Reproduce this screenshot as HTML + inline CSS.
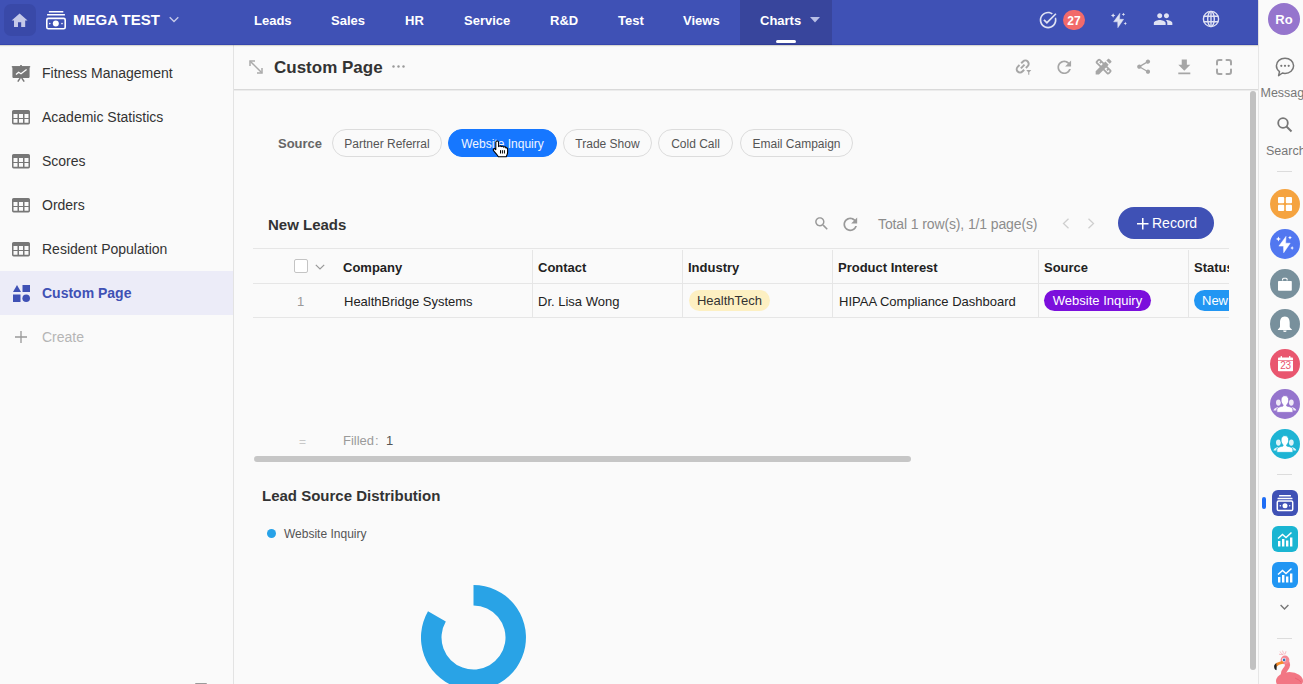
<!DOCTYPE html>
<html><head><meta charset="utf-8">
<style>
*{box-sizing:border-box;margin:0;padding:0}
html,body{width:1303px;height:684px;overflow:hidden;background:#fafafa;font-family:"Liberation Sans",sans-serif;color:#333}
.abs{position:absolute}
svg{position:absolute;overflow:visible}
#top{position:absolute;z-index:5;left:0;top:0;width:1258px;height:45px;background:#3f51b5;border-bottom:1px solid #3546ad;box-shadow:0 1px 1px rgba(40,40,0,.16)}
#home{position:absolute;left:4px;top:4px;width:32px;height:32px;border-radius:7px;background:#3949a8}
.brand{position:absolute;left:73px;top:11px;font-size:15px;font-weight:bold;color:#fff}
.nav{position:absolute;top:13px;font-size:13px;font-weight:bold;color:#fff;white-space:nowrap}
#charts{position:absolute;left:740px;top:0;width:92px;height:45px;background:#38459c;border-bottom:1px solid #2f3b95}
#side{position:absolute;left:0;top:45px;width:234px;height:639px;background:#fafafa;border-right:1px solid #e3e3e3}
.si{position:absolute;left:0;width:233px;height:44px}
.si .t{position:absolute;left:42px;top:14px;font-size:14px;color:#333;white-space:nowrap}
.si.act{background:#ececf8}
.si.act .t{color:#3f51b5;font-weight:bold}
#rail{position:absolute;left:1258px;top:0;width:45px;height:684px;background:#fafafa;border-left:1px solid #e6e6e6}
.rl{position:absolute;font-size:12px;color:#777;white-space:nowrap}
.rc{position:absolute;left:10.5px;width:30px;height:30px;border-radius:50%}
.rs{position:absolute;left:12.5px;width:26px;height:26px;border-radius:6px}
.rdiv{position:absolute;left:18px;width:15px;height:1px;background:#dcdcdc}
#main{position:absolute;left:234px;top:45px;width:1024px;height:639px;background:#fafafa}
#titlebar{position:absolute;left:0;top:0;width:1024px;height:45px;border-bottom:1px solid #d9d9d9;box-shadow:0 1px 0 #ececec}
.chip{position:absolute;top:129px;height:28px;border:1px solid #dcdcdc;border-radius:14px;font-size:12px;color:#555;line-height:28px;text-align:center;white-space:nowrap}
.chip.on{background:#1677ff;border-color:#1677ff;color:#f0f5ff}
.th{position:absolute;top:260px;font-size:13px;font-weight:bold;color:#222;white-space:nowrap}
.td{position:absolute;top:294px;font-size:13px;color:#222;white-space:nowrap}
.vl{position:absolute;width:1px;background:#e6e6e6;top:250px;height:67px}
.hl{position:absolute;height:1px;background:#e6e6e6;left:253px;width:976px}
.tag{position:absolute;top:290px;height:21px;border-radius:11px;font-size:13px;line-height:22px;text-align:center;white-space:nowrap}
</style></head><body>
<div id="top">
  <div id="home">
    <svg style="left:6.4px;top:6.5px" width="19.2" height="19.2" viewBox="0 0 24 24"><path fill="#c5c9e8" d="M10 20v-6h4v6h5v-8h3L12 3 2 12h3v8z"/></svg>
  </div>
  <svg style="left:46px;top:10.9px" width="20" height="19" viewBox="0 0 20 19"><rect x="2.8" y="0" width="14.6" height="1.6" rx=".5" fill="#fff"/><rect x="1" y="2.9" width="18" height="1.7" rx=".5" fill="#fff"/><rect x="0.8" y="7.4" width="18.4" height="10.3" rx="1.5" fill="none" stroke="#fff" stroke-width="1.6"/><circle cx="9.8" cy="12.6" r="3" fill="#fff"/><circle cx="3.8" cy="12.6" r=".8" fill="#fff"/><circle cx="16" cy="12.6" r=".8" fill="#fff"/></svg>
  <div class="brand">MEGA TEST</div>
  <svg style="left:169px;top:16px" width="10" height="7" viewBox="0 0 10 7"><path d="M.7 1.2l4.3 4.3 4.3-4.3" fill="none" stroke="#c5c9e8" stroke-width="1.4"/></svg>
  <div class="nav" style="left:254px">Leads</div>
  <div class="nav" style="left:331px">Sales</div>
  <div class="nav" style="left:405px">HR</div>
  <div class="nav" style="left:464px">Service</div>
  <div class="nav" style="left:550px">R&amp;D</div>
  <div class="nav" style="left:618px">Test</div>
  <div class="nav" style="left:683px">Views</div>
  <div id="charts">
    <div class="nav" style="left:20px">Charts</div>
    <svg style="left:70px;top:17px" width="10" height="6" viewBox="0 0 10 6"><path d="M0 0h10L5 5.5z" fill="#b9bfe6"/></svg>
    <div class="abs" style="left:36px;top:39.8px;width:20px;height:3px;border-radius:1.5px;background:#fff"></div>
  </div>
  <!-- right icons -->
  <svg style="left:1037.5px;top:9.8px" width="20.2" height="20.2" viewBox="0 0 24 24"><path fill="#dfe2f3" d="M22 5.18L10.59 16.6l-4.24-4.24 1.41-1.41 2.83 2.83 10-10L22 5.18zm-2.21 5.04c.13.57.21 1.17.21 1.78 0 4.42-3.58 8-8 8s-8-3.58-8-8 3.58-8 8-8c1.58 0 3.04.46 4.28 1.25l1.44-1.44C16.1 2.67 14.13 2 12 2 6.48 2 2 6.48 2 12s4.48 10 10 10 10-4.48 10-10c0-1.19-.22-2.33-.6-3.39l-1.61 1.61z"/></svg>
  <div class="abs" style="left:1063px;top:10px;width:22px;height:20px;border-radius:10px;background:#f26a6a;color:#fff;font-size:12px;font-weight:bold;text-align:center;line-height:22px">27</div>
  <svg style="left:1111px;top:11.5px" width="16" height="16" viewBox="0 0 18 18"><path d="M10 1.4 L2.9 11.1 H7.5 L7.7 17.7 L14.2 8.2 H9.6 Z" fill="#dfe2f3" stroke="#dfe2f3" stroke-width=".5" stroke-linejoin="round"/><path d="M2.40 1.50 L3.20 3.20 L4.90 4.00 L3.20 4.80 L2.40 6.50 L1.60 4.80 L-0.10 4.00 L1.60 3.20Z M14.00 0.80 L14.61 2.09 L15.90 2.70 L14.61 3.31 L14.00 4.60 L13.39 3.31 L12.10 2.70 L13.39 2.09Z M16.10 11.10 L16.71 12.39 L18.00 13.00 L16.71 13.61 L16.10 14.90 L15.49 13.61 L14.20 13.00 L15.49 12.39Z" fill="#dfe2f3"/></svg>
  <svg style="left:1152.9px;top:8.8px" width="20.2" height="20.2" viewBox="0 0 24 24"><path fill="#dfe2f3" d="M16 11c1.66 0 2.99-1.34 2.99-3S17.66 5 16 5c-1.66 0-3 1.34-3 3s1.34 3 3 3zm-8 0c1.66 0 2.99-1.34 2.99-3S9.66 5 8 5C6.34 5 5 6.34 5 8s1.34 3 3 3zm0 2c-2.33 0-7 1.17-7 3.5V19h14v-2.5c0-2.33-4.67-3.5-7-3.5zm8 0c-.29 0-.62.02-.97.05 1.16.84 1.97 1.970 1.970 3.450V19h6v-2.500c0-2.330-4.670-3.500-7-3.500z"/></svg>
  <svg style="left:1202px;top:10px" width="18" height="18" viewBox="0 0 18 18"><g fill="none" stroke="#dfe2f3" stroke-width="1.4"><circle cx="9" cy="9" r="7.6"/><ellipse cx="9" cy="9" rx="3.3" ry="7.6"/><path d="M1.6 6.3h14.8M1.6 11.7h14.8M9 1.4v15.2"/></g></svg>
</div>

<div id="side">
  <div class="si" style="top:6px">
    <svg style="left:12px;top:14px" width="18" height="17" viewBox="0 0 18 17"><rect x="8.2" y="0" width="1.6" height="1.6" fill="#777"/><rect x="-.2" y="1.1" width="18.4" height="1.2" fill="#777"/><rect x=".4" y="1.5" width="17.2" height="11.4" rx=".8" fill="#777"/><path d="M4 9.6L6.6 7.3 9 8.8 14.6 4.6" fill="none" stroke="#fff" stroke-width="1.3"/><path d="M8.3 12.8L5.8 16.6M9.7 12.8l2.5 3.8" stroke="#777" stroke-width="1.5"/></svg>
    <div class="t">Fitness Management</div></div>
  <div class="si" style="top:50px">
    <svg style="left:12px;top:15px" width="18" height="14.4" viewBox="0 0 18 14.4"><path fill="#777" fill-rule="evenodd" d="M1.6 0h14.8A1.6 1.6 0 0 1 18 1.6v11.2a1.6 1.6 0 0 1-1.6 1.6H1.6A1.6 1.6 0 0 1 0 12.8V1.6A1.6 1.6 0 0 1 1.6 0zM1.5 4v4h4V4zm5.5 0v4h4V4zm5.5 0v4h4V4zM1.5 9v3.8h4V9zm5.5 0v3.8h4V9zm5.5 0v3.8h4V9z"/></svg>
    <div class="t">Academic Statistics</div></div>
  <div class="si" style="top:94px">
    <svg style="left:12px;top:15px" width="18" height="14.4" viewBox="0 0 18 14.4"><path fill="#777" fill-rule="evenodd" d="M1.6 0h14.8A1.6 1.6 0 0 1 18 1.6v11.2a1.6 1.6 0 0 1-1.6 1.6H1.6A1.6 1.6 0 0 1 0 12.8V1.6A1.6 1.6 0 0 1 1.6 0zM1.5 4v4h4V4zm5.5 0v4h4V4zm5.5 0v4h4V4zM1.5 9v3.8h4V9zm5.5 0v3.8h4V9zm5.5 0v3.8h4V9z"/></svg>
    <div class="t">Scores</div></div>
  <div class="si" style="top:138px">
    <svg style="left:12px;top:15px" width="18" height="14.4" viewBox="0 0 18 14.4"><path fill="#777" fill-rule="evenodd" d="M1.6 0h14.8A1.6 1.6 0 0 1 18 1.6v11.2a1.6 1.6 0 0 1-1.6 1.6H1.6A1.6 1.6 0 0 1 0 12.8V1.6A1.6 1.6 0 0 1 1.6 0zM1.5 4v4h4V4zm5.5 0v4h4V4zm5.5 0v4h4V4zM1.5 9v3.8h4V9zm5.5 0v3.8h4V9zm5.5 0v3.8h4V9z"/></svg>
    <div class="t">Orders</div></div>
  <div class="si" style="top:182px">
    <svg style="left:12px;top:15px" width="18" height="14.4" viewBox="0 0 18 14.4"><path fill="#777" fill-rule="evenodd" d="M1.6 0h14.8A1.6 1.6 0 0 1 18 1.6v11.2a1.6 1.6 0 0 1-1.6 1.6H1.6A1.6 1.6 0 0 1 0 12.8V1.6A1.6 1.6 0 0 1 1.6 0zM1.5 4v4h4V4zm5.5 0v4h4V4zm5.5 0v4h4V4zM1.5 9v3.8h4V9zm5.5 0v3.8h4V9zm5.5 0v3.8h4V9z"/></svg>
    <div class="t">Resident Population</div></div>
  <div class="si act" style="top:226px">
    <svg style="left:12.5px;top:14px" width="17" height="17" viewBox="0 0 17 17"><path d="M4 0L8 7H0z" fill="#3f51b5"/><rect x="9.5" y="0" width="7.5" height="7" fill="#3f51b5"/><rect x="0" y="9.5" width="7.5" height="7.5" fill="#3f51b5"/><circle cx="13.2" cy="13.2" r="3.8" fill="#3f51b5"/></svg>
    <div class="t">Custom Page</div></div>
  <div class="si" style="top:270px">
    <svg style="left:15px;top:16px" width="12" height="12" viewBox="0 0 12 12"><path d="M6 0v12M0 6h12" stroke="#999" stroke-width="1.3"/></svg>
    <div class="t" style="color:#b5b5b5">Create</div></div>
  <div class="abs" style="left:195px;top:638px;width:12px;height:2px;background:#9a9a9a;border-radius:1px"></div>
</div>

<div id="main">
  <div id="titlebar">
    <svg style="left:15px;top:15px" width="14" height="14" viewBox="0 0 14 14"><g fill="none" stroke="#aaa" stroke-width="1.5"><path d="M1.2 1.2l11.6 11.6"/><path d="M1 6V1h5M13 8v5H8"/></g></svg>
    <div class="abs" style="left:40px;top:13px;font-size:17px;font-weight:bold;color:#333;white-space:nowrap">Custom Page</div>
    <svg style="left:158px;top:20px" width="13" height="3" viewBox="0 0 13 3"><circle cx="1.5" cy="1.5" r="1.2" fill="#999"/><circle cx="6.5" cy="1.5" r="1.2" fill="#999"/><circle cx="11.5" cy="1.5" r="1.2" fill="#999"/></svg>
    <!-- right toolbar icons -->
    <svg style="left:780px;top:12px" width="20" height="20" viewBox="0 0 20 20"><g transform="translate(8.7 9.5) rotate(-45)" fill="none" stroke="#a6a6a6" stroke-width="2"><path d="M-1.2 -3.3H-3.8A3.3 3.3 0 0 0 -3.8 3.3H-1.2"/><path d="M1.2 -3.3H3.8A3.3 3.3 0 0 1 3.8 3.3H1.2"/><path d="M-2.6 0H2.6"/></g><path d="M12.2 13H17.3L15.3 15.3V17.8H14.2V15.3Z" fill="#a6a6a6"/></svg>
    <svg style="left:819.7px;top:11.7px" width="20.5" height="20.5" viewBox="0 0 24 24"><path fill="#a6a6a6" d="M17.65 6.35C16.2 4.9 14.21 4 12 4c-4.42 0-7.99 3.58-7.99 8s3.57 8 7.99 8c3.730 0 6.840-2.550 7.730-6h-2.080c-.820 2.330-3.040 4-5.650 4-3.310 0-6-2.690-6-6s2.690-6 6-6c1.660 0 3.140.690 4.220 1.780L13 11h7V4l-2.350 2.350z"/></svg>
    <svg style="left:859.4px;top:11.4px" width="21.2" height="21.2" viewBox="0 0 24 24"><path fill="#a6a6a6" d="M16.24 11.51l1.57-1.57-3.75-3.75-1.57 1.57-4.14-4.13c-.78-.78-2.05-.78-2.83 0l-1.9 1.9c-.78.78-.78 2.05 0 2.83l4.13 4.13L3 17.25V21h3.75l4.76-4.76 4.13 4.13c.95.95 2.23.6 2.83 0l1.9-1.9c.78-.78.78-2.05 0-2.83l-4.13-4.13zm-7.06-.44L5.04 6.94l1.89-1.9L8.2 6.31 7.02 7.5l1.41 1.41 1.19-1.19 1.45 1.45-1.89 1.9zm7.88 7.89l-4.13-4.14 1.9-1.9 1.45 1.45-1.19 1.19 1.41 1.41 1.19-1.19 1.27 1.27-1.9 1.91zM20.71 7.04c.39-.39.39-1.02 0-1.41l-2.34-2.34c-.47-.47-1.12-.29-1.41 0l-1.83 1.83 3.750 3.750 1.830-1.830z"/></svg>
    <svg style="left:901.4px;top:13.2px" width="17.3" height="17.3" viewBox="0 0 24 24"><path fill="#a6a6a6" d="M18 16.08c-.76 0-1.44.3-1.96.77L8.91 12.7c.05-.23.09-.46.09-.7s-.04-.47-.09-.7l7.05-4.11c.54.5 1.25.81 2.04.81 1.66 0 3-1.34 3-3s-1.34-3-3-3-3 1.34-3 3c0 .24.04.47.09.7L8.04 9.81C7.5 9.31 6.79 9 6 9c-1.66 0-3 1.34-3 3s1.34 3 3 3c.79 0 1.5-.31 2.04-.81l7.12 4.16c-.05.21-.08.43-.08.65 0 1.61 1.31 2.92 2.92 2.920 1.610 0 2.920-1.310 2.920-2.920s-1.310-2.920-2.920-2.920z"/></svg>
    <svg style="left:939.7px;top:11.5px" width="20.6" height="20.6" viewBox="0 0 24 24"><path fill="#a6a6a6" d="M19 9h-4V3H9v6H5l7 7 7-7zM5 18v2h14v-2H5z"/></svg>
    <svg style="left:982px;top:14px" width="16" height="16" viewBox="0 0 16 16"><path d="M1 5.5V3A2 2 0 0 1 3 1H5.5M10.5 1H13A2 2 0 0 1 15 3V5.5M15 10.5V13A2 2 0 0 1 13 15H10.5M5.5 15H3A2 2 0 0 1 1 13V10.5" fill="none" stroke="#a6a6a6" stroke-width="2" stroke-linecap="round"/></svg>
  </div>
  <div class="abs" style="left:1016px;top:46px;width:6px;height:579px;border-radius:3px;background:#c1c1c1"></div>
</div>

<div class="abs" style="left:278px;top:136px;font-size:13px;font-weight:bold;color:#666">Source</div>
<div class="chip" style="left:332px;width:110px">Partner Referral</div>
<div class="chip on" style="left:448px;width:109px">Website Inquiry</div>
<div class="chip" style="left:563px;width:89px">Trade Show</div>
<div class="chip" style="left:658px;width:75px">Cold Call</div>
<div class="chip" style="left:740px;width:113px">Email Campaign</div>
<svg style="left:492px;top:140px" width="17" height="18" viewBox="0 0 17 18"><path d="M3.8 2.4C3.8 1.6 4.4 1 5.2 1 6 1 6.6 1.6 6.6 2.4V6.6C7 5.8 8.8 5.6 9.2 6.6 9.8 5.9 11.4 6 11.6 7.1 12.3 6.5 13.9 6.8 14 8 14.6 7.6 15.6 8 15.6 9V12.4C15.6 14 14.9 15.3 14.2 16.8H6.4C5.4 15.2 3.2 12.6 1.7 10.9 1 10.1 1.2 9 2 8.7 2.7 8.5 3.3 8.9 3.8 9.6Z" fill="#fff" stroke="#000" stroke-width="1.1" stroke-linejoin="round"/><path d="M8.5 10.2V13.5M10.4 10.2V13.5M12.4 10.2V13.5" stroke="#000" stroke-width="1"/></svg>

<div class="abs" style="left:268px;top:216px;font-size:15px;font-weight:bold;color:#333">New Leads</div>
<svg style="left:812.8px;top:215px" width="17.3" height="17.3" viewBox="0 0 24 24"><path fill="#999" d="M15.5 14h-.79l-.28-.27C15.41 12.59 16 11.11 16 9.5 16 5.91 13.09 3 9.5 3S3 5.910 3 9.500 5.910 16 9.500 16c1.610 0 3.090-.590 4.230-1.570l.270.280v.790l5 4.990L20.490 19l-4.990-5zm-6 0C7.010 14 5 11.990 5 9.500S7.010 5 9.500 5 14 7.010 14 9.500 11.990 14 9.500 14z"/></svg>
<svg style="left:839.6px;top:213.8px" width="20.6" height="20.6" viewBox="0 0 24 24"><path fill="#999" d="M17.65 6.35C16.2 4.9 14.21 4 12 4c-4.42 0-7.99 3.58-7.99 8s3.57 8 7.99 8c3.730 0 6.840-2.550 7.730-6h-2.080c-.820 2.330-3.040 4-5.650 4-3.310 0-6-2.690-6-6s2.690-6 6-6c1.660 0 3.140.690 4.220 1.780L13 11h7V4l-2.350 2.350z"/></svg>
<div class="abs" style="left:878px;top:216px;font-size:14px;color:#8c8c8c;white-space:nowrap;letter-spacing:-.12px">Total 1 row(s), 1/1 page(s)</div>
<svg style="left:1062px;top:218px" width="8" height="11" viewBox="0 0 8 11"><path d="M6.5 .8L1.5 5.5l5 4.7" fill="none" stroke="#cfcfcf" stroke-width="1.3"/></svg>
<svg style="left:1087px;top:218px" width="8" height="11" viewBox="0 0 8 11"><path d="M1.5 .8l5 4.7-5 4.7" fill="none" stroke="#cfcfcf" stroke-width="1.3"/></svg>
<div class="abs" style="left:1118px;top:207px;width:96px;height:32px;border-radius:16px;background:#3f51b5"></div>
<svg style="left:1136.5px;top:217.5px" width="11.5" height="11.5" viewBox="0 0 12 12"><path d="M6 0v12M0 6h12" stroke="#fff" stroke-width="1.6"/></svg>
<div class="abs" style="left:1152px;top:215px;font-size:14px;color:#fff">Record</div>

<div class="hl" style="top:248px"></div>
<div class="hl" style="top:283px"></div>
<div class="hl" style="top:317px"></div>
<div class="vl" style="left:532px"></div>
<div class="vl" style="left:682px"></div>
<div class="vl" style="left:832px"></div>
<div class="vl" style="left:1038px"></div>
<div class="vl" style="left:1188px"></div>
<div class="abs" style="left:294px;top:259px;width:14px;height:14px;border:1px solid #c4c4c4;border-radius:2px;background:#fff"></div>
<svg style="left:315px;top:264px" width="10" height="6" viewBox="0 0 10 6"><path d="M.8 .8L5 5 9.2 .8" fill="none" stroke="#999" stroke-width="1.2"/></svg>
<div class="th" style="left:343px">Company</div>
<div class="th" style="left:538px">Contact</div>
<div class="th" style="left:688px">Industry</div>
<div class="th" style="left:838px">Product Interest</div>
<div class="th" style="left:1044px">Source</div>
<div class="th" style="left:1194px;width:35px;overflow:hidden">Status</div>
<div class="td" style="left:297px;color:#999">1</div>
<div class="td" style="left:344px">HealthBridge Systems</div>
<div class="td" style="left:538px">Dr. Lisa Wong</div>
<div class="tag" style="left:689px;width:81px;background:#fdf0c2;color:#333">HealthTech</div>
<div class="td" style="left:839px">HIPAA Compliance Dashboard</div>
<div class="tag" style="left:1044px;width:107px;background:#7b0fdc;color:#fff">Website Inquiry</div>
<div class="abs" style="left:1194px;top:290px;width:35px;height:21px;overflow:hidden"><div class="tag" style="left:0;top:0;width:50px;background:#2196f3;color:#fff;text-align:left;padding-left:8px">New</div></div>

<div class="abs" style="left:299px;top:435px;font-size:12px;color:#c8c8c8">=</div>
<div class="abs" style="left:343px;top:433px;font-size:13px;color:#9a9a9a">Filled</div><div class="abs" style="left:375px;top:433px;font-size:13px;color:#9a9a9a">:</div>
<div class="abs" style="left:386px;top:433px;font-size:13px;color:#555">1</div>
<div class="abs" style="left:254px;top:456px;width:657px;height:6px;border-radius:3px;background:#c6c6c6"></div>

<div class="abs" style="left:262px;top:487px;font-size:15px;font-weight:bold;color:#333;white-space:nowrap">Lead Source Distribution</div>
<div class="abs" style="left:267px;top:529px;width:9px;height:9px;border-radius:50%;background:#27a2e8"></div>
<div class="abs" style="left:284px;top:527px;font-size:12px;color:#555">Website Inquiry</div>
<svg style="left:0;top:0" width="1303" height="684" viewBox="0 0 1303 684"><path d="M473.5 585 A52.5 52.5 0 1 1 428 611.25 L445.8 621.5 A32 32 0 1 0 473.5 605.5 Z" fill="#29a3e6"/></svg>

<div id="rail">
  <div class="abs" style="left:9px;top:3px;width:32px;height:32px;border-radius:50%;background:#9575cd;color:#fff;font-size:13px;font-weight:bold;text-align:center;line-height:34px">Ro</div>
  <svg style="left:16px;top:57px" width="20" height="20" viewBox="0 0 20 20"><path d="M10 1.2c4.8 0 8.6 3.3 8.6 7.6S14.8 16.4 10 16.4c-.9 0-1.8-.1-2.6-.4L3.6 18.6l.9-4C2.5 13.2 1.4 11.1 1.4 8.8 1.4 4.5 5.2 1.2 10 1.2z" fill="none" stroke="#777" stroke-width="1.5" stroke-linejoin="round"/><circle cx="6.3" cy="8.8" r="1.1" fill="#777"/><circle cx="10" cy="8.8" r="1.1" fill="#777"/><circle cx="13.7" cy="8.8" r="1.1" fill="#777"/></svg>
  <div class="rl" style="left:1.5px;top:86px;font-size:12.5px">Message</div>
  <svg style="left:18px;top:117px" width="16" height="15" viewBox="0 0 16 15"><circle cx="6" cy="6" r="4.8" fill="none" stroke="#777" stroke-width="1.8"/><path d="M9.5 9.5l5 5" stroke="#777" stroke-width="2"/></svg>
  <div class="rl" style="left:7px;top:144px;font-size:12.5px">Search</div>
  <div class="rdiv" style="top:171px"></div>
  <div class="rc" style="top:189px;background:#f5a33f">
    <svg style="left:8px;top:8px" width="14" height="14" viewBox="0 0 14 14"><g fill="#fff"><rect x="0" y="0" width="6.2" height="6.2" rx="1"/><rect x="7.8" y="0" width="6.2" height="6.2" rx="1"/><rect x="0" y="7.8" width="6.2" height="6.2" rx="1"/><rect x="7.8" y="7.8" width="6.2" height="6.2" rx="1"/></g></svg>
  </div>
  <div class="rc" style="top:229px;background:#5177f0">
    <svg style="left:6px;top:6px" width="18" height="18" viewBox="0 0 18 18"><path d="M10 1.4 L2.9 11.1 H7.5 L7.7 17.7 L14.2 8.2 H9.6 Z" fill="#fff" stroke="#fff" stroke-width=".5" stroke-linejoin="round"/><path d="M2.40 1.50 L3.20 3.20 L4.90 4.00 L3.20 4.80 L2.40 6.50 L1.60 4.80 L-0.10 4.00 L1.60 3.20Z M14.00 0.80 L14.61 2.09 L15.90 2.70 L14.61 3.31 L14.00 4.60 L13.39 3.31 L12.10 2.70 L13.39 2.09Z M16.10 11.10 L16.71 12.39 L18.00 13.00 L16.71 13.61 L16.10 14.90 L15.49 13.61 L14.20 13.00 L15.49 12.39Z" fill="#fff"/></svg>
  </div>
  <div class="rc" style="top:269px;background:#78909c">
    <svg style="left:0;top:0" width="30" height="30" viewBox="0 0 30 30"><path d="M12.6 11.6V10.2c0-.6.4-1 1-1h2.5c.6 0 1 .4 1 1v1.4" fill="none" stroke="#fff" stroke-width="1.1"/><rect x="8" y="11.9" width="13.8" height="9.8" rx=".8" fill="#fff"/></svg>
  </div>
  <div class="rc" style="top:309px;background:#78909c">
    <svg style="left:0;top:0" width="30" height="30" viewBox="0 0 30 30"><path d="M14.85 7.6C11.3 7.6 10 10.4 10 13.5V17.4C10 18.5 8.9 19.5 7.9 20.2V21H21.8V20.2C20.8 19.5 19.7 18.5 19.7 17.4V13.5C19.7 10.4 18.4 7.6 14.85 7.6Z" fill="#fff"/><path d="M13.1 21.6H16.6A1.75 1.5 0 0 1 13.1 21.6Z" fill="#fff"/></svg>
  </div>
  <div class="rc" style="top:349px;background:#e9566f">
    <svg style="left:8px;top:7px" width="15" height="16" viewBox="0 0 15 16"><rect x="0" y="1.6" width="15" height="13.7" rx=".8" fill="#fff"/><rect x="2.6" y="0" width="1.4" height="2.5" rx=".5" fill="#fff"/><rect x="11" y="0" width="1.4" height="2.5" rx=".5" fill="#fff"/><rect x="0" y="4.2" width="15" height=".7" fill="#e9566f"/><text x="7.5" y="13.4" font-size="10" font-family="Liberation Sans" fill="#e9566f" text-anchor="middle" letter-spacing="-.3">23</text></svg>
  </div>
  <div class="rc" style="top:389px;background:#9575cd">
    <svg style="left:0;top:0" width="30" height="30" viewBox="0 0 30 30"><g fill="#fff" opacity=".85"><ellipse cx="8.4" cy="13.6" rx="2.4" ry="3.1"/><ellipse cx="21.3" cy="13.6" rx="2.4" ry="3.1"/><path d="M3.4 21.4c.3-1.6 2.2-2.6 5-3.3l2.4.6v2.7z"/><path d="M26.3 21.4c-.3-1.6-2.2-2.6-5-3.3l-2.4.6v2.7z"/></g><g fill="#fff" stroke="#9575cd" stroke-width=".9"><path d="M14.85 6.6c2.3 0 3.9 1.9 3.9 4.4 0 2.2-.9 3.9-2 4.9v1.1c3.6.6 6.2 1.8 6.2 3.8v2.6H6.8v-2.6c0-2 2.6-3.2 6.2-3.8v-1.1c-1.1-1-2-2.7-2-4.9 0-2.5 1.6-4.4 3.9-4.4z"/></g></svg>
  </div>
  <div class="rc" style="top:429px;background:#1eb4d4">
    <svg style="left:0;top:0" width="30" height="30" viewBox="0 0 30 30"><g fill="#fff" opacity=".85"><ellipse cx="8.4" cy="13.6" rx="2.4" ry="3.1"/><ellipse cx="21.3" cy="13.6" rx="2.4" ry="3.1"/><path d="M3.4 21.4c.3-1.6 2.2-2.6 5-3.3l2.4.6v2.7z"/><path d="M26.3 21.4c-.3-1.6-2.2-2.6-5-3.3l-2.4.6v2.7z"/></g><g fill="#fff" stroke="#1eb4d4" stroke-width=".9"><path d="M14.85 6.6c2.3 0 3.9 1.9 3.9 4.4 0 2.2-.9 3.9-2 4.9v1.1c3.6.6 6.2 1.8 6.2 3.8v2.6H6.8v-2.6c0-2 2.6-3.2 6.2-3.8v-1.1c-1.1-1-2-2.7-2-4.9 0-2.5 1.6-4.4 3.9-4.4z"/></g></svg>
  </div>
  <div class="rdiv" style="top:474px"></div>
  <div class="abs" style="left:3px;top:497px;width:4px;height:12px;border-radius:2px;background:#1f6df5"></div>
  <div class="rs" style="top:490px;background:#3f51b5">
    <svg style="left:4px;top:4px" width="18" height="18" viewBox="0 0 18 18"><rect x="3" y="1" width="12" height="1.5" rx=".5" fill="#fff"/><rect x="1.5" y="3.8" width="15" height="1.5" rx=".5" fill="#fff"/><rect x="1.3" y="7" width="15.4" height="9.5" rx="1.3" fill="none" stroke="#fff" stroke-width="1.5"/><circle cx="9" cy="11.7" r="2.5" fill="#fff"/><circle cx="4.3" cy="11.7" r=".7" fill="#fff"/><circle cx="13.7" cy="11.7" r=".7" fill="#fff"/></svg>
  </div>
  <div class="rs" style="top:526px;background:#1ab5d2">
    <svg style="left:5px;top:5px" width="16" height="16" viewBox="0 0 16 16"><g fill="#fff"><rect x="1" y="10" width="2.4" height="5.5"/><rect x="5" y="8" width="2.4" height="7.5"/><rect x="9" y="9.5" width="2.4" height="6"/><rect x="13" y="6.5" width="2.4" height="9"/></g><path d="M1 7.5L5.5 3.5l3.5 3 5.5-5" fill="none" stroke="#fff" stroke-width="1.5"/></svg>
  </div>
  <div class="rs" style="top:562px;background:#2196f3">
    <svg style="left:5px;top:5px" width="16" height="16" viewBox="0 0 16 16"><g fill="#fff"><rect x="1" y="10" width="2.4" height="5.5"/><rect x="5" y="8" width="2.4" height="7.5"/><rect x="9" y="9.5" width="2.4" height="6"/><rect x="13" y="6.5" width="2.4" height="9"/></g><path d="M1 7.5L5.5 3.5l3.5 3 5.5-5" fill="none" stroke="#fff" stroke-width="1.5"/></svg>
  </div>
  <svg style="left:21px;top:604px" width="9" height="7" viewBox="0 0 9 7"><path d="M.6 1l3.9 4 3.9-4" fill="none" stroke="#777" stroke-width="1.4"/></svg>
  <div class="rdiv" style="top:638px"></div>
  <svg style="left:14px;top:650px" width="31" height="34" viewBox="0 0 31 34">
    <path d="M7 1.5c.8 1.5 1.8 2.5 3.2 3M9.5 .6c.5 1.6 1 2.6 2 3.6M13 1.2c-.3 1.4-.6 2.4-1.2 3.2M6 4.2c1.4.3 2.8.5 4.2.3" stroke="#f6a0ae" stroke-width=".7" fill="none"/>
    <ellipse cx="16.5" cy="31" rx="13.5" ry="9" fill="#f27684"/>
    <path d="M13.2 11.5c2.6 2.6 1.5 5.5-1.2 8.5-2.3 2.6-2.5 6 .5 8.5" fill="none" stroke="#f27684" stroke-width="5" stroke-linecap="round"/>
    <circle cx="12" cy="10" r="4.4" fill="#f58793"/>
    <path d="M9.5 10.8L3.2 13 1.8 15.6 3.6 16.8 6 14.7 10.8 13.6z" fill="#f4892a"/>
    <path d="M3.2 13L1.4 15c-.6 1.3-.3 2.9.6 4.6l1.5.6.2-3.4z" fill="#222"/>
    <circle cx="11" cy="9.8" r="2" fill="#fff"/><circle cx="11.1" cy="9.9" r="1.35" fill="#3b72b8"/>
    <path d="M22 28c2.5 1 4.5 2.3 6 4" stroke="#e85d6d" stroke-width=".8" fill="none"/>
  </svg>
</div>
</body></html>
